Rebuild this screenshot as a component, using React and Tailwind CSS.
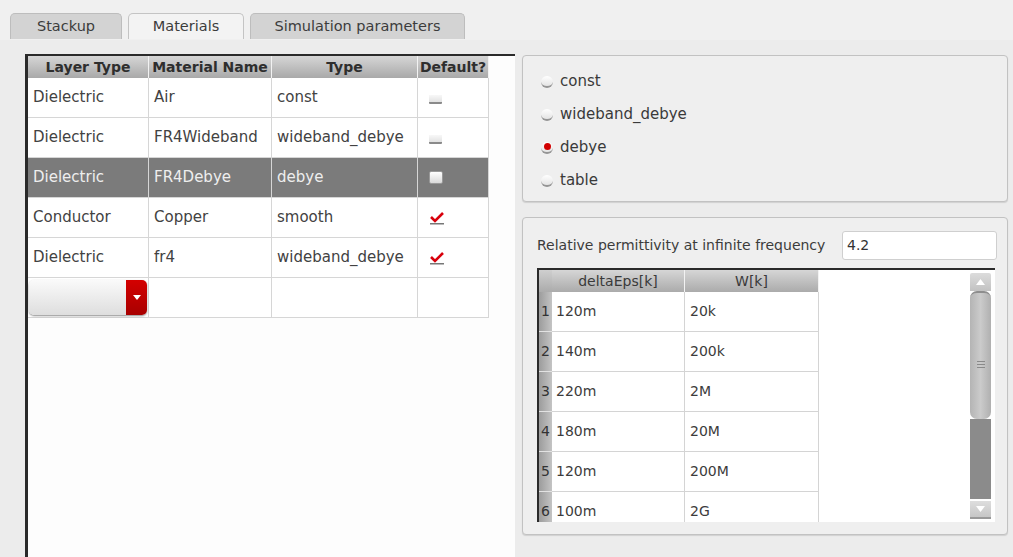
import React from 'react';

const font = { fontFamily: '"DejaVu Sans", "Liberation Sans", sans-serif' };

const materials = [
  { layer: 'Dielectric', name: 'Air', type: 'const', def: false },
  { layer: 'Dielectric', name: 'FR4Wideband', type: 'wideband_debye', def: false },
  { layer: 'Dielectric', name: 'FR4Debye', type: 'debye', def: false, selected: true },
  { layer: 'Conductor', name: 'Copper', type: 'smooth', def: true },
  { layer: 'Dielectric', name: 'fr4', type: 'wideband_debye', def: true },
];

const poles = [
  ['120m', '20k'],
  ['140m', '200k'],
  ['220m', '2M'],
  ['180m', '20M'],
  ['120m', '200M'],
  ['100m', '2G'],
];

const Check = ({ checked, selected }) => {
  if (checked) {
    return (
      <svg width="16" height="14" viewBox="0 0 16 14">
        <path d="M2 6 L6 10 L14 2" fill="none" stroke="#d8000c" strokeWidth="2.6" />
        <rect x="1" y="12" width="14" height="1.5" fill="#777" />
      </svg>
    );
  }
  if (selected) {
    return <div className="w-[14px] h-[13px] rounded-[2px] bg-gradient-to-b from-white to-[#d9d9d9] border border-[#999]" />;
  }
  return (
    <div className="w-[13px] h-[9px] mt-[4px] bg-gradient-to-b from-[#f8f8f8] to-[#e2e2e2] border-b-2 border-[#8a8a8a] rounded-b-[1px]" />
  );
};

const Radio = ({ on, label }) => (
  <div className="flex items-center gap-[7px] h-[33px]">
    <div className="w-[12px] h-[12px] rounded-full bg-gradient-to-b from-white to-[#e4e4e4] border-b-2 border-[#959595] flex items-center justify-center">
      {on && <div className="w-[7px] h-[7px] rounded-full bg-[#d10000]" />}
    </div>
    <span className="text-[15px] text-[#3a3a3a]">{label}</span>
  </div>
);

const Tab = ({ label, active, w }) => (
  <div
    className={`h-[26px] flex items-center justify-center rounded-t-[5px] border border-b-0 text-[14.5px] text-[#3c3c3c] ${
      active ? 'bg-[#f3f3f3] border-[#c4c4c4]' : 'bg-[#d3d3d3] border-[#bdbdbd]'
    }`}
    style={{ width: w }}
  >
    {label}
  </div>
);

export default function App() {
  return (
    <div className="w-[1013px] h-[557px] overflow-hidden bg-[#ececec]" style={font}>
      <div className="flex gap-[6px] pl-[10px] pt-[13px] h-[40px] bg-[#f0f0f0]">
        <Tab label="Stackup" w={112} />
        <Tab label="Materials" active w={116} />
        <Tab label="Simulation parameters" w={215} />
      </div>

      <div className="flex gap-[7px] pl-[25px] pt-[14px]">
        {/* materials table */}
        <div className="w-[490px] h-[503px] bg-[#fdfdfd] border-t-[2px] border-l-[3px] border-[#2a2a2a]">
          <div className="flex w-[461px] h-[22px] text-[14px] font-bold text-[#2e2e2e]">
            {[
              ['Layer Type', 121],
              ['Material Name', 123],
              ['Type', 146],
              ['Default?', 71],
            ].map(([h, w]) => (
              <div
                key={h}
                className="flex items-center justify-center bg-gradient-to-b from-[#d6d6d6] to-[#a9a9a9] border-r border-[#f2f2f2] whitespace-nowrap overflow-hidden"
                style={{ width: w }}
              >
                {h}
              </div>
            ))}
          </div>
          {materials.map((m) => (
            <div
              key={m.name}
              className={`flex w-[461px] h-[40px] text-[15px] ${m.selected ? 'bg-[#7b7b7b] text-[#eeeeee]' : 'bg-white text-[#424242]'}`}
            >
              <div className="w-[121px] px-[5px] flex items-center border-r border-b border-[#d6d6d6]">{m.layer}</div>
              <div className="w-[123px] px-[5px] flex items-center border-r border-b border-[#d6d6d6]">{m.name}</div>
              <div className="w-[146px] px-[5px] flex items-center border-r border-b border-[#d6d6d6]">{m.type}</div>
              <div className="w-[71px] pl-[11px] flex items-center border-r border-b border-[#d6d6d6]">
                <Check checked={m.def} selected={m.selected} />
              </div>
            </div>
          ))}
          <div className="flex w-[461px] h-[40px] bg-white">
            <div className="w-[121px] flex items-center pl-[1px] border-r border-b border-[#d6d6d6]">
              <div className="flex w-[118px] h-[35px] rounded-[5px] overflow-hidden shadow-[0_1px_2px_rgba(0,0,0,0.45)]">
                <div className="flex-1 bg-gradient-to-b from-[#fafafa] to-[#dedede]" />
                <div className="w-[21px] bg-gradient-to-b from-[#d40000] to-[#a80000] flex items-center justify-center">
                  <svg width="8" height="5" viewBox="0 0 8 5">
                    <path d="M0 0 L8 0 L4 5 Z" fill="#fff" />
                  </svg>
                </div>
              </div>
            </div>
            <div className="w-[123px] border-r border-b border-[#d6d6d6]" />
            <div className="w-[146px] border-r border-b border-[#d6d6d6]" />
            <div className="w-[71px] border-r border-b border-[#d6d6d6]" />
          </div>
        </div>

        {/* right side */}
        <div className="flex flex-col gap-[15px] pt-[1px]">
          <div className="w-[486px] h-[147px] rounded-[4px] border border-[#c2c2c2] bg-[#efefef] pl-[18px] pt-[9px] shadow-[0_1px_1px_rgba(0,0,0,0.12)]">
            <Radio label="const" />
            <Radio label="wideband_debye" />
            <Radio on label="debye" />
            <Radio label="table" />
          </div>

          <div className="w-[486px] h-[318px] rounded-[4px] border border-[#c2c2c2] bg-[#efefef] pl-[14px] pr-[10px] pt-[13px] shadow-[0_1px_1px_rgba(0,0,0,0.12)]">
            <div className="flex items-center justify-between h-[29px]">
              <span className="text-[14px] text-[#3c3c3c]">Relative permittivity at infinite frequency</span>
              <div className="w-[155px] h-[29px] bg-white border border-[#cfcfcf] rounded-[3px] flex items-center px-[4px] text-[14px] text-[#333]">
                4.2
              </div>
            </div>

            <div className="mt-[8px] h-[254px] flex bg-white border-t-[2px] border-l-[2px] border-[#2a2a2a] overflow-hidden mr-[2px]">
              <div className="flex-1 overflow-hidden">
                <div className="flex h-[22px] text-[14px] text-[#3a3a3a]">
                  <div className="w-[13px] bg-gradient-to-b from-[#cfcfcf] to-[#ababab]" />
                  <div className="w-[133px] flex items-center justify-center bg-gradient-to-b from-[#d6d6d6] to-[#ababab] border-r border-[#f2f2f2]">
                    deltaEps[k]
                  </div>
                  <div className="w-[134px] flex items-center justify-center bg-gradient-to-b from-[#d6d6d6] to-[#ababab] border-r border-[#f2f2f2]">
                    W[k]
                  </div>
                </div>
                {poles.map(([d, w], i) => (
                  <div key={i} className="flex h-[40px] text-[14px] text-[#3c3c3c]">
                    <div className="w-[13px] flex items-center justify-center bg-gradient-to-r from-[#9c9c9c] to-[#c4c4c4] border-b border-[#e2e2e2] text-[#333]">
                      {i + 1}
                    </div>
                    <div className="w-[133px] px-[4px] flex items-center border-r border-b border-[#d4d4d4]">{d}</div>
                    <div className="w-[134px] px-[5px] flex items-center border-r border-b border-[#d4d4d4]">{w}</div>
                  </div>
                ))}
              </div>
              <div className="w-[21px] mt-[3px] mr-[4px] flex flex-col">
                <div className="h-[18px] bg-gradient-to-b from-[#dcdcdc] to-[#c2c2c2] flex items-center justify-center rounded-t-[2px]">
                  <svg width="9" height="6" viewBox="0 0 9 6">
                    <path d="M4.5 0 L9 6 L0 6 Z" fill="#fff" />
                  </svg>
                </div>
                <div className="h-[128px] bg-gradient-to-r from-[#b4b4b4] via-[#cbcbcb] to-[#b0b0b0] rounded-[7px] border-t-2 border-[#8e8e8e] flex items-center justify-center">
                  <div className="flex flex-col gap-[2px] pt-[16px]">
                    <div className="w-[8px] h-px bg-[#8a8a8a]" />
                    <div className="w-[8px] h-px bg-[#8a8a8a]" />
                    <div className="w-[8px] h-px bg-[#8a8a8a]" />
                  </div>
                </div>
                <div className="flex-1 bg-[#8b8b8b]" />
                <div className="h-[18px] mt-[2px] bg-gradient-to-b from-[#dedede] to-[#c6c6c6] flex items-center justify-center border-b-2 border-[#999]">
                  <svg width="9" height="6" viewBox="0 0 9 6">
                    <path d="M0 0 L9 0 L4.5 6 Z" fill="#fff" />
                  </svg>
                </div>
                <div className="h-[3px]" />
              </div>
            </div>
          </div>
        </div>
      </div>
    </div>
  );
}
